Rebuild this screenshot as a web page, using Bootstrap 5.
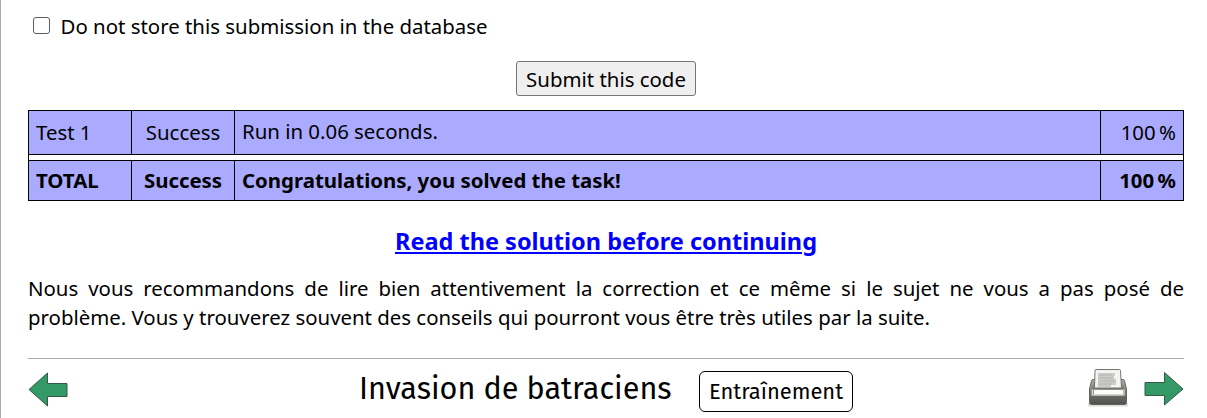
<!DOCTYPE html>
<html lang="fr">
<head>
<meta charset="utf-8">
<meta name="viewport" content="width=device-width, initial-scale=1">
<title>Invasion de batraciens</title>
<link rel="stylesheet" href="https://cdn.jsdelivr.net/npm/bootstrap@5.3.0/dist/css/bootstrap.min.css">
<style>
body { font-family: "Noto Sans", sans-serif; font-size: 20.4px; line-height: 29px; color: #000; background: #fff; overflow: hidden; }
.page { height: 418px; border-left: 1px solid #aaa; padding: 0 23px 0 27px; }
.store { padding-top: 12px; height: 61px; }
.store .form-check-input { width: 17px; height: 17px; margin: 5px 10.6px 0 5px; border: 1px solid #5c5c5c; border-radius: 3px; }
.btn-send { width: 180px; height: 35px; padding: 1px 0 0; font-size: 20.4px; line-height: 32px; color: #000; background: #efefef; border: 1px solid #767676; border-radius: 3px; }
.results { width: 1156px; height: 91px; margin-top: 14px; table-layout: fixed; border-collapse: collapse; color: #000; }
.results td { border: 1px solid #000; background: #aaf; padding: 0 7px; vertical-align: middle; line-height: 29px; }
.results td.message { padding-bottom: 2px; }
.thin { letter-spacing: -1.6px; }
.results .gap td { background: #fff; padding: 0; line-height: 0; }
.read { margin-top: 24px; font-size: 23.5px; line-height: 32px; }
.read a { color: #00f; }
.advice { margin-top: 17px; text-align: justify; }
.foot { margin-top: 26px; border-top: 1px solid #aaa; height: 60px; }
.task-title, .mode { font-family: "Fira Sans", "Noto Sans", sans-serif; }
.task-head { margin-top: 12px; margin-left: 56px; }
.task-title { font-size: 30.6px; line-height: 36px; width: 313px; }
.mode { width: 154px; height: 41px; margin-left: 27px; border: 1px solid #000; border-radius: 6px; font-size: 21.9px; line-height: 41px; }
</style>
</head>
<body>
<main class="page">
  <div class="store d-flex align-items-start">
    <input class="form-check-input" type="checkbox" id="nostore">
    <label for="nostore">Do not store this submission in the database</label>
  </div>
  <div class="d-flex justify-content-center"><button class="btn btn-send" type="button">Submit this code</button></div>
  <table class="results">
    <colgroup><col style="width:103px"><col style="width:103px"><col style="width:866px"><col style="width:83px"></colgroup>
    <tbody>
    <tr style="height:44px"><td>Test 1</td><td class="text-center">Success</td><td class="message">Run in 0.06 seconds.</td><td class="text-end">100<span class="thin">&#8239;</span>%</td></tr>
    <tr class="gap" style="height:6px"><td colspan="4"></td></tr>
    <tr class="fw-bold" style="height:40px"><td>TOTAL</td><td class="text-center">Success</td><td>Congratulations, you solved the task!</td><td class="text-end">100<span class="thin">&#8239;</span>%</td></tr>
    </tbody>
  </table>
  <div class="read text-center fw-bold"><a href="#">Read the solution before continuing</a></div>
  <p class="advice mb-0">Nous vous recommandons de lire bien attentivement la correction et ce même si le sujet ne vous a pas posé de problème. Vous y trouverez souvent des conseils qui pourront vous être très utiles par la suite.</p>
  <footer class="foot d-flex justify-content-between align-items-start">
    <svg width="40" height="40" viewBox="0 0 40 40" style="margin-top:10px"><path d="M1 20.500 19.500 4v10.500H39v13H19.500V37z" fill="#339966" stroke="#355b48"/></svg>
    <div class="task-head d-flex"><div class="task-title text-nowrap">Invasion de batraciens</div><div class="mode text-center">Entraînement</div></div>
    <div class="d-flex" style="margin-top:10px">
      <svg width="40" height="40" viewBox="0 0 40 40">
        <defs><linearGradient id="g" x2="0" y2="1"><stop stop-color="#b5b5af"/><stop offset=".4" stop-color="#8d8d87"/><stop offset=".7" stop-color="#666661"/><stop offset="1" stop-color="#50504c"/></linearGradient>
        <linearGradient id="t" x2="0" y2="1"><stop stop-color="#a5a59f"/><stop offset="1" stop-color="#77776f"/></linearGradient></defs>
        <path d="M0 34h40v2q0 1.500-2 1.500H2q-2 0-2-1.500z" fill="#ddd"/>
        <path d="M5 10.500h30q1 0 1.500 1.500l2 8v13.500q0 2-2 2h-33q-2 0-2-2V20l2-8q.5-1.500 1.500-1.500z" fill="url(#g)" stroke="#62625d"/>
        <path d="M5.500 11.500h29L36.500 20H3.500z" fill="url(#t)"/>
        <path d="M8 .5h23.500q1 0 1 1l1 17.500H6.500l.5-17.500q0-1 1-1z" fill="#f3f3f1" stroke="#75756f"/>
        <path d="M10 4h17v3h-1v3h2v6h-5v2H10z" fill="#cbcbc9"/><path d="M11 6h13M10 9h15M12 12h15M10 15h14" stroke="#b5b5b3"/>
        <path d="M3 20h34v7H3z" fill="#92928c"/><path d="M6 21h29v4.500H6z" fill="#fdfdfc"/><path d="M4.500 20.500V26h31.500v-5.500" fill="none" stroke="#deded8"/>
      </svg>
      <svg width="40" height="40" viewBox="0 0 40 40" style="margin-left:16px"><path d="M39 20 20.500 3.500V13.500H1v13h19.500v9.500z" fill="#339966" stroke="#355b48"/></svg>
    </div>
  </footer>
</main>
<script src="https://cdn.jsdelivr.net/npm/bootstrap@5.3.0/dist/js/bootstrap.bundle.min.js"></script>
</body>
</html>
